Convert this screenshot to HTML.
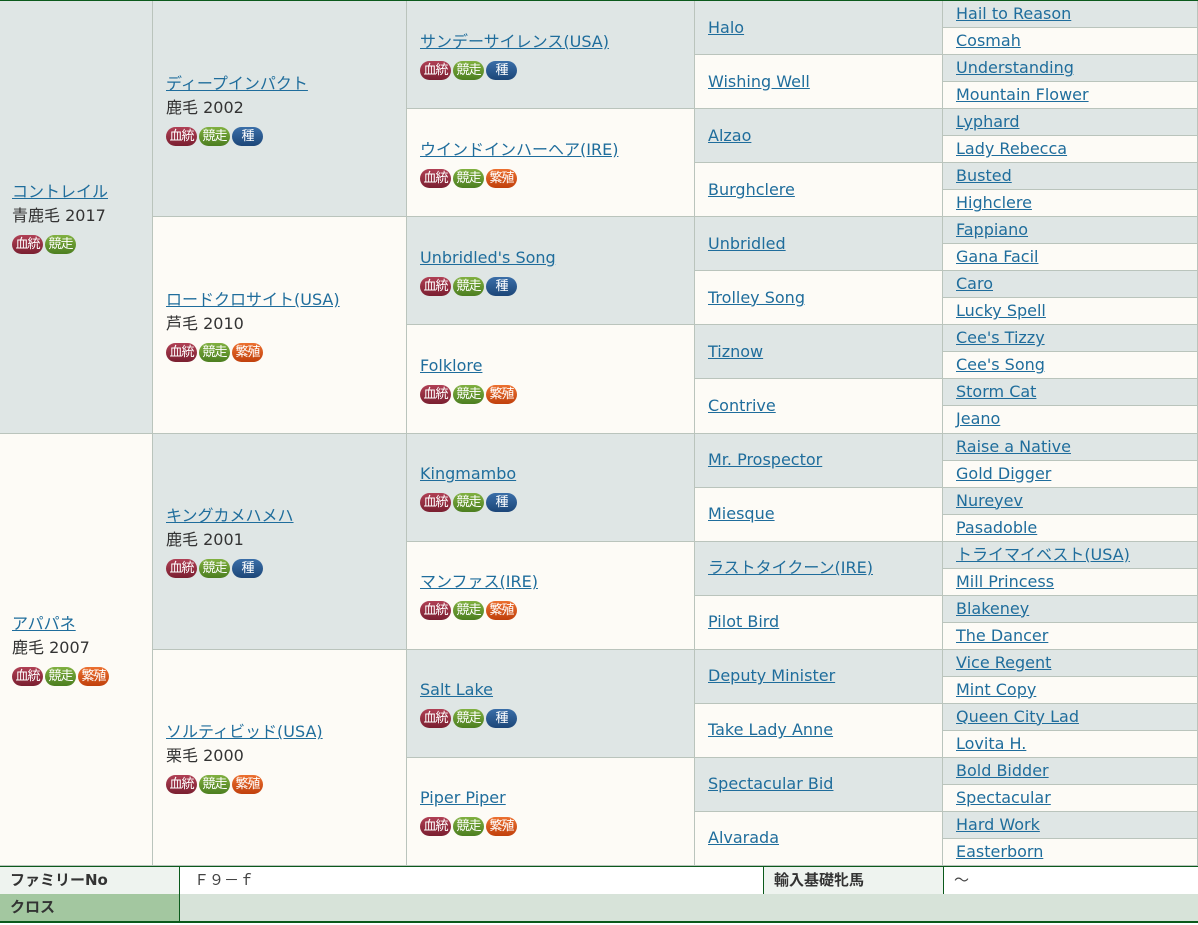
<!DOCTYPE html>
<html><head><meta charset="utf-8"><style>
body{margin:0;width:1198px;height:925px;background:#fff;font-family:"DejaVu Sans","Noto Sans CJK JP",sans-serif;font-size:16px;color:#333;overflow:hidden}
#g{position:absolute;left:0;top:0;width:1198px;height:866px;border-top:1px solid #0b5a1c;display:grid;grid-template-columns:153px 254px 288px 248px 255px;grid-template-rows:repeat(32,1fr);box-sizing:border-box}
#g>div{box-sizing:border-box;border-right:1px solid #bac4bc;border-bottom:1px solid #bac4bc;display:flex;flex-direction:column;justify-content:center;padding-left:13px;white-space:nowrap}
#g>div:nth-child(-n+2){padding-left:12px}
.a{background:#dfe6e5}.b{background:#fdfbf6}
a{color:#1f6d9c;text-decoration:underline;line-height:24px}
.s{line-height:24px}
.bd{display:flex;gap:2px;margin-top:7px}
.bd span{display:inline-block;width:31px;height:19px;border-radius:10px;color:#fff;font-size:13px;line-height:19px;text-align:center;letter-spacing:-1px}
.r{background:linear-gradient(#b04055,#7a1f30)}
.gr{background:linear-gradient(#80b040,#4c7e20)}
.bl{background:linear-gradient(#3a6ea8,#1c4678)}
.o{background:linear-gradient(#ec7030,#c0400c)}
#f{position:absolute;left:0;top:866px;width:1198px;border-top:1px solid #0b5a1c;border-bottom:2px solid #0b5a1c;font-size:15px}
#f div{position:absolute;box-sizing:border-box;padding-left:10px;line-height:27px}
</style></head><body>
<div id="g">
<div class="a" style="grid-area:1/1/17/2"><a>コントレイル</a><span class="s">青鹿毛 2017</span><div class="bd"><span class="r">血統</span><span class="gr">競走</span></div></div>
<div class="b" style="grid-area:17/1/33/2"><a>アパパネ</a><span class="s">鹿毛 2007</span><div class="bd"><span class="r">血統</span><span class="gr">競走</span><span class="o">繁殖</span></div></div>

<div class="a" style="grid-area:1/2/9/3"><a>ディープインパクト</a><span class="s">鹿毛 2002</span><div class="bd"><span class="r">血統</span><span class="gr">競走</span><span class="bl">種</span></div></div>
<div class="b" style="grid-area:9/2/17/3"><a>ロードクロサイト(USA)</a><span class="s">芦毛 2010</span><div class="bd"><span class="r">血統</span><span class="gr">競走</span><span class="o">繁殖</span></div></div>
<div class="a" style="grid-area:17/2/25/3"><a>キングカメハメハ</a><span class="s">鹿毛 2001</span><div class="bd"><span class="r">血統</span><span class="gr">競走</span><span class="bl">種</span></div></div>
<div class="b" style="grid-area:25/2/33/3"><a>ソルティビッド(USA)</a><span class="s">栗毛 2000</span><div class="bd"><span class="r">血統</span><span class="gr">競走</span><span class="o">繁殖</span></div></div>

<div class="a" style="grid-area:1/3/5/4"><a>サンデーサイレンス(USA)</a><div class="bd"><span class="r">血統</span><span class="gr">競走</span><span class="bl">種</span></div></div>
<div class="b" style="grid-area:5/3/9/4"><a>ウインドインハーヘア(IRE)</a><div class="bd"><span class="r">血統</span><span class="gr">競走</span><span class="o">繁殖</span></div></div>
<div class="a" style="grid-area:9/3/13/4"><a>Unbridled's Song</a><div class="bd"><span class="r">血統</span><span class="gr">競走</span><span class="bl">種</span></div></div>
<div class="b" style="grid-area:13/3/17/4"><a>Folklore</a><div class="bd"><span class="r">血統</span><span class="gr">競走</span><span class="o">繁殖</span></div></div>
<div class="a" style="grid-area:17/3/21/4"><a>Kingmambo</a><div class="bd"><span class="r">血統</span><span class="gr">競走</span><span class="bl">種</span></div></div>
<div class="b" style="grid-area:21/3/25/4"><a>マンファス(IRE)</a><div class="bd"><span class="r">血統</span><span class="gr">競走</span><span class="o">繁殖</span></div></div>
<div class="a" style="grid-area:25/3/29/4"><a>Salt Lake</a><div class="bd"><span class="r">血統</span><span class="gr">競走</span><span class="bl">種</span></div></div>
<div class="b" style="grid-area:29/3/33/4"><a>Piper Piper</a><div class="bd"><span class="r">血統</span><span class="gr">競走</span><span class="o">繁殖</span></div></div>

<div class="a" style="grid-area:1/4/3/5"><a>Halo</a></div>
<div class="b" style="grid-area:3/4/5/5"><a>Wishing Well</a></div>
<div class="a" style="grid-area:5/4/7/5"><a>Alzao</a></div>
<div class="b" style="grid-area:7/4/9/5"><a>Burghclere</a></div>
<div class="a" style="grid-area:9/4/11/5"><a>Unbridled</a></div>
<div class="b" style="grid-area:11/4/13/5"><a>Trolley Song</a></div>
<div class="a" style="grid-area:13/4/15/5"><a>Tiznow</a></div>
<div class="b" style="grid-area:15/4/17/5"><a>Contrive</a></div>
<div class="a" style="grid-area:17/4/19/5"><a>Mr. Prospector</a></div>
<div class="b" style="grid-area:19/4/21/5"><a>Miesque</a></div>
<div class="a" style="grid-area:21/4/23/5"><a>ラストタイクーン(IRE)</a></div>
<div class="b" style="grid-area:23/4/25/5"><a>Pilot Bird</a></div>
<div class="a" style="grid-area:25/4/27/5"><a>Deputy Minister</a></div>
<div class="b" style="grid-area:27/4/29/5"><a>Take Lady Anne</a></div>
<div class="a" style="grid-area:29/4/31/5"><a>Spectacular Bid</a></div>
<div class="b" style="grid-area:31/4/33/5"><a>Alvarada</a></div>

<div class="a" style="grid-area:1/5/2/6"><a>Hail to Reason</a></div>
<div class="b" style="grid-area:2/5/3/6"><a>Cosmah</a></div>
<div class="a" style="grid-area:3/5/4/6"><a>Understanding</a></div>
<div class="b" style="grid-area:4/5/5/6"><a>Mountain Flower</a></div>
<div class="a" style="grid-area:5/5/6/6"><a>Lyphard</a></div>
<div class="b" style="grid-area:6/5/7/6"><a>Lady Rebecca</a></div>
<div class="a" style="grid-area:7/5/8/6"><a>Busted</a></div>
<div class="b" style="grid-area:8/5/9/6"><a>Highclere</a></div>
<div class="a" style="grid-area:9/5/10/6"><a>Fappiano</a></div>
<div class="b" style="grid-area:10/5/11/6"><a>Gana Facil</a></div>
<div class="a" style="grid-area:11/5/12/6"><a>Caro</a></div>
<div class="b" style="grid-area:12/5/13/6"><a>Lucky Spell</a></div>
<div class="a" style="grid-area:13/5/14/6"><a>Cee's Tizzy</a></div>
<div class="b" style="grid-area:14/5/15/6"><a>Cee's Song</a></div>
<div class="a" style="grid-area:15/5/16/6"><a>Storm Cat</a></div>
<div class="b" style="grid-area:16/5/17/6"><a>Jeano</a></div>
<div class="a" style="grid-area:17/5/18/6"><a>Raise a Native</a></div>
<div class="b" style="grid-area:18/5/19/6"><a>Gold Digger</a></div>
<div class="a" style="grid-area:19/5/20/6"><a>Nureyev</a></div>
<div class="b" style="grid-area:20/5/21/6"><a>Pasadoble</a></div>
<div class="a" style="grid-area:21/5/22/6"><a>トライマイベスト(USA)</a></div>
<div class="b" style="grid-area:22/5/23/6"><a>Mill Princess</a></div>
<div class="a" style="grid-area:23/5/24/6"><a>Blakeney</a></div>
<div class="b" style="grid-area:24/5/25/6"><a>The Dancer</a></div>
<div class="a" style="grid-area:25/5/26/6"><a>Vice Regent</a></div>
<div class="b" style="grid-area:26/5/27/6"><a>Mint Copy</a></div>
<div class="a" style="grid-area:27/5/28/6"><a>Queen City Lad</a></div>
<div class="b" style="grid-area:28/5/29/6"><a>Lovita H.</a></div>
<div class="a" style="grid-area:29/5/30/6"><a>Bold Bidder</a></div>
<div class="b" style="grid-area:30/5/31/6"><a>Spectacular</a></div>
<div class="a" style="grid-area:31/5/32/6"><a>Hard Work</a></div>
<div class="b" style="grid-area:32/5/33/6"><a>Easterborn</a></div>
</div>
<div id="f" style="height:54px">
<div style="left:0;top:0;width:180px;height:27px;background:#eef3ef;border-right:1px solid #0b5a1c;font-weight:bold">ファミリーNo</div>
<div style="left:180px;top:0;width:583px;height:27px;padding-left:14px;color:#444">Ｆ９－ｆ</div>
<div style="left:763px;top:0;width:181px;height:27px;background:#eef3ef;border-left:1px solid #0b5a1c;border-right:1px solid #0b5a1c;font-weight:bold">輸入基礎牝馬</div>
<div style="left:944px;top:0;width:254px;height:27px;color:#444">～</div>
<div style="left:0;top:27px;width:180px;height:27px;background:#a3c7a0;border-right:1px solid #0b5a1c;font-weight:bold">クロス</div>
<div style="left:180px;top:27px;width:1018px;height:27px;background:#d7e3d9"></div>
</div>
</body></html>
